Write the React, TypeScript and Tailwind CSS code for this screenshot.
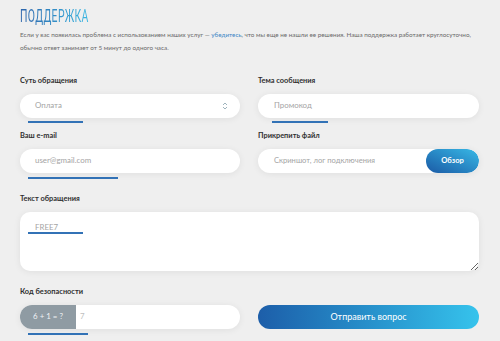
import React from "react";

const bar = "absolute h-[2px] bg-[#3272b6]";

function Label({ children }: { children: React.ReactNode }) {
  return (
    <div className="h-[12px] mb-[7px] text-[7.4px] leading-[12px] font-bold text-[#2f2f2f]">
      {children}
    </div>
  );
}

function Field({ children }: { children: React.ReactNode }) {
  return (
    <div className="h-[24px] rounded-full bg-white shadow-[0_1px_7px_rgba(0,0,0,0.07)] flex items-center text-[7.9px] text-[#a4a4a4] overflow-hidden">
      {children}
    </div>
  );
}

export default function App() {
  return (
    <div
      className="w-[500px] h-[341px] bg-[#efefef] overflow-hidden pl-[20px] pr-[21px]"
      style={{ fontFamily: "Lato, 'Open Sans', sans-serif" }}
    >
      <div className="h-[28px] pt-[4px]">
        <span
          className="inline-block origin-left scale-x-[0.55] text-[19px] leading-[22px] tracking-[0.6px] bg-gradient-to-r from-[#2c64ab] to-[#3cb8e2] bg-clip-text text-transparent"
          style={{ fontFamily: "Roboto, sans-serif" }}
        >
          ПОДДЕРЖКА
        </span>
      </div>
      <p className="text-[6.3px] leading-[13px] text-[#6a6a6a] whitespace-nowrap">
        Если у вас появилась проблема с использованием наших услуг —{" "}
        <span className="text-[#3d86c6]">убедитесь</span>, что мы еще не нашли ее решения. Наша поддержка работает круглосуточно,
        <br />
        обычно ответ занимает от 5 минут до одного часа.
      </p>

      <div className="grid grid-cols-[220px_221px] gap-x-[18px] mt-[21px]">
        <div className="relative">
          <Label>Суть обращения</Label>
          <Field>
            <span className="pl-[15px] flex-1">Оплата</span>
            <svg width="6" height="10" viewBox="0 0 6 10" className="mr-[12px]" fill="none" stroke="#9fb4bd" strokeWidth="1">
              <path d="M1 4 L3 2 L5 4" />
              <path d="M1 6 L3 8 L5 6" />
            </svg>
          </Field>
          <div className={`${bar} left-[8px] w-[55px] top-[46px]`} />
        </div>
        <div className="relative">
          <Label>Тема сообщения</Label>
          <Field>
            <span className="pl-[16px]">Промокод</span>
          </Field>
          <div className={`${bar} left-[14px] w-[56px] top-[46px]`} />
        </div>

        <div className="relative mt-[12px]">
          <Label>Ваш e-mail</Label>
          <Field>
            <span className="pl-[15px]">user@gmail.com</span>
          </Field>
          <div className={`${bar} left-[8px] w-[90px] top-[47px]`} />
        </div>
        <div className="relative mt-[12px]">
          <Label>Прикрепить файл</Label>
          <Field>
            <span className="pl-[16px] flex-1 text-[7.6px]">Скриншот, лог подключения</span>
            <span className="h-[24px] w-[53px] rounded-full bg-gradient-to-tr from-[#1c5aa5] to-[#39b9e6] text-white font-bold text-[7.6px] flex items-center justify-center">
              Обзор
            </span>
          </Field>
        </div>

        <div className="relative col-span-2 mt-[20px]">
          <Label>Текст обращения</Label>
          <textarea
            readOnly
            defaultValue="FREE7"
            className="block w-full h-[59px] rounded-[10px] bg-white shadow-[0_1px_7px_rgba(0,0,0,0.07)] pl-[15px] pt-[9px] text-[7.9px] leading-[12px] text-[#a4a4a4] outline-none"
          />
          <div className={`${bar} left-[8px] w-[55px] top-[39px]`} />
        </div>

        <div className="relative mt-[15px]">
          <Label>Код безопасности</Label>
          <Field>
            <span className="h-[24px] w-[56px] bg-[#8f9ba3] text-[#eef1f3] flex items-center justify-center">
              6 + 1 = ?
            </span>
            <span className="pl-[4px] text-[#c0c0c0]">7</span>
          </Field>
          <div className={`${bar} left-[8px] w-[60px] top-[47px]`} />
        </div>
        <div className="mt-[15px] pt-[19px]">
          <div className="h-[24px] rounded-full bg-gradient-to-r from-[#1d5ea9] to-[#36c3ec] text-white text-[9px] flex items-center justify-center">
            Отправить вопрос
          </div>
        </div>
      </div>
    </div>
  );
}
